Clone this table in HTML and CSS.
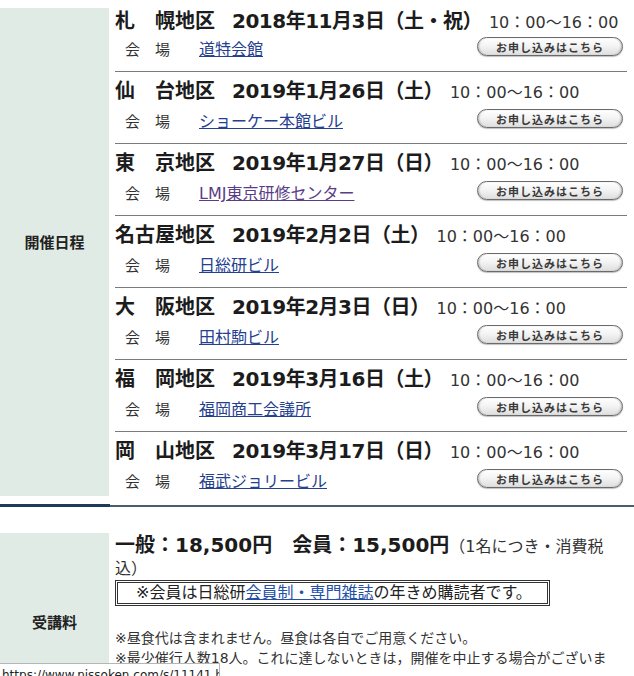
FILE: index.html
```html
<!DOCTYPE html>
<html lang="ja">
<head>
<meta charset="utf-8">
<title>開催日程</title>
<link rel="stylesheet" href="styles.css">
</head>
<body>
<div class="page">
  <section class="info-row">
    <div class="label label-schedule">開催日程</div>
    <div class="cell">
      <div class="session">
        <div class="title"><span class="area">札　幌地区</span><span class="date">2018年11月3日（土・祝）</span><span class="time">10：00～16：00</span></div>
        <div class="venue"><span class="venue-label">会　場</span><a href="#" class="venue-link">道特会館</a><a href="#" class="apply">お申し込みはこちら</a></div>
      </div>
      <div class="session">
        <div class="title"><span class="area">仙　台地区</span><span class="date">2019年1月26日（土）</span><span class="time">10：00～16：00</span></div>
        <div class="venue"><span class="venue-label">会　場</span><a href="#" class="venue-link">ショーケー本館ビル</a><a href="#" class="apply">お申し込みはこちら</a></div>
      </div>
      <div class="session">
        <div class="title"><span class="area">東　京地区</span><span class="date">2019年1月27日（日）</span><span class="time">10：00～16：00</span></div>
        <div class="venue"><span class="venue-label">会　場</span><a href="#" class="venue-link visited">LMJ東京研修センター</a><a href="#" class="apply">お申し込みはこちら</a></div>
      </div>
      <div class="session">
        <div class="title"><span class="area">名古屋地区</span><span class="date">2019年2月2日（土）</span><span class="time">10：00～16：00</span></div>
        <div class="venue"><span class="venue-label">会　場</span><a href="#" class="venue-link">日総研ビル</a><a href="#" class="apply">お申し込みはこちら</a></div>
      </div>
      <div class="session">
        <div class="title"><span class="area">大　阪地区</span><span class="date">2019年2月3日（日）</span><span class="time">10：00～16：00</span></div>
        <div class="venue"><span class="venue-label">会　場</span><a href="#" class="venue-link">田村駒ビル</a><a href="#" class="apply">お申し込みはこちら</a></div>
      </div>
      <div class="session">
        <div class="title"><span class="area">福　岡地区</span><span class="date">2019年3月16日（土）</span><span class="time">10：00～16：00</span></div>
        <div class="venue"><span class="venue-label">会　場</span><a href="#" class="venue-link">福岡商工会議所</a><a href="#" class="apply">お申し込みはこちら</a></div>
      </div>
      <div class="session">
        <div class="title"><span class="area">岡　山地区</span><span class="date">2019年3月17日（日）</span><span class="time">10：00～16：00</span></div>
        <div class="venue"><span class="venue-label">会　場</span><a href="#" class="venue-link">福武ジョリービル</a><a href="#" class="apply">お申し込みはこちら</a></div>
      </div>
    </div>
  </section>

  <div class="divider"><span class="divider-accent"></span><span class="divider-line"></span></div>

  <section class="info-row">
    <div class="label">受講料</div>
    <div class="cell fee-cell">
      <p class="price"><strong>一般：18,500円　会員：15,500円</strong><span class="price-note">（1名につき・消費税込）</span></p>
      <p class="member-note">※会員は日総研<a href="#" class="inline-link">会員制・専門雑誌</a>の年きめ購読者です。</p>
      <ul class="notes">
        <li>※昼食代は含まれません。昼食は各自でご用意ください。</li>
        <li>※最少催行人数18人。これに達しないときは，開催を中止する場合がございます。</li>
      </ul>
    </div>
  </section>
</div>
<div class="statusbar">https://www.nissoken.com/s/11141.html</div>
</body>
</html>
```

FILE: styles.css
```css
html, body {
  margin: 0;
  padding: 0;
  background: #fff;
}

body {
  font-family: "DejaVu Sans", "Noto Sans CJK JP", sans-serif;
  color: #1c1c1c;
  font-size: 16px;
}

.page {
  padding-top: 8px;
}

.info-row {
  display: grid;
  grid-template-columns: 109px 1fr;
  column-gap: 6px;
}

.label {
  background: #e1ebe5;
  display: flex;
  align-items: center;
  justify-content: center;
  font-family: "Noto Sans CJK JP", sans-serif;
  font-weight: bold;
  font-size: 15px;
  color: #222;
}

.label-schedule {
  padding-bottom: 22px;
}

.cell {
  padding-right: 7px;
}

.session {
  padding: 6px 0 11px;
  border-bottom: 1px solid #7a7a7a;
}

.session:first-child {
  padding-top: 0;
}

.session:first-child .venue {
  margin-top: 4px;
}

.session:last-child {
  border-bottom: 0;
  padding-bottom: 4px;
}

.title {
  display: flex;
  align-items: baseline;
  height: 24px;
  line-height: 24px;
  white-space: nowrap;
}

.area {
  font-family: "Noto Sans CJK JP", sans-serif;
  font-weight: bold;
  font-size: 20px;
  margin-right: 17px;
}

.date {
  font-weight: bold;
  font-size: 20px;
  letter-spacing: -0.5px;
}

.time {
  font-size: 16px;
  margin-left: 7px;
  color: #333;
}

.venue {
  display: flex;
  align-items: center;
  height: 24px;
  margin-top: 6px;
}

.venue-label {
  font-family: "Noto Sans CJK JP", sans-serif;
  font-size: 15px;
  margin-left: 10px;
  width: 74px;
  color: #333;
}

.venue-link {
  font-size: 16px;
  color: #24408f;
  text-decoration: underline;
}

.venue-link.visited {
  color: #5a3d86;
}

.apply {
  margin-left: auto;
  margin-right: 4px;
  width: 146px;
  height: 19px;
  box-sizing: border-box;
  border: 1px solid #6a6a6a;
  border-radius: 10px;
  background: linear-gradient(#ffffff, #f4f4f4 45%, #dedede);
  box-shadow: inset 2px 0 2px -1px rgba(0, 0, 0, 0.25), inset -2px 0 2px -1px rgba(0, 0, 0, 0.25), 0 1px 1px rgba(0, 0, 0, 0.25);
  display: flex;
  align-items: center;
  justify-content: center;
  font-family: "Noto Sans CJK JP", sans-serif;
  font-size: 11px;
  font-weight: bold;
  letter-spacing: 1px;
  color: #3a3a3a;
  text-decoration: none;
  margin-top: -3px;
}

.divider {
  display: flex;
  align-items: center;
  margin: 8px 0 26px;
}

.divider-accent {
  width: 110px;
  height: 3px;
  background: #1d3a5d;
}

.divider-line {
  flex: 1;
  height: 2px;
  background: #4d5b6b;
}

.fee-cell {
  padding-top: 1px;
  padding-bottom: 21px;
}

.price {
  margin: 0;
  line-height: 22px;
}

.price strong {
  font-size: 20px;
}

.price-note {
  font-size: 16px;
  color: #333;
}

.member-note {
  margin: 0;
  width: fit-content;
  border: 3px double #333;
  padding: 0 15px 0 18px;
  font-size: 16px;
  line-height: 20px;
  color: #222;
}

.inline-link {
  color: #2450a8;
  text-decoration: underline;
}

.notes {
  list-style: none;
  margin: 22px 0 0;
  padding: 0;
  font-size: 14px;
  line-height: 20px;
  color: #333;
}

.statusbar {
  position: fixed;
  left: 0;
  bottom: -12px;
  width: 220px;
  height: 25px;
  box-sizing: border-box;
  padding: 3px 0 0 2px;
  background: #fff;
  border: 1px solid #b5b5b5;
  border-left: 0;
  font-family: "DejaVu Sans", sans-serif;
  font-size: 12px;
  line-height: 16px;
  color: #222;
  white-space: nowrap;
  overflow: hidden;
}
```
